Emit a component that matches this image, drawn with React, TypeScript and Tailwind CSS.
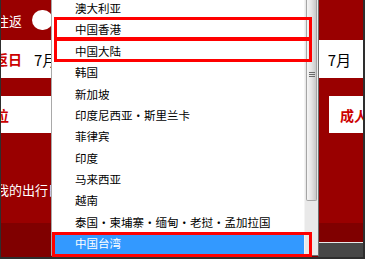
const regions = [
  "澳大利亚",
  "中国香港",
  "中国大陆",
  "韩国",
  "新加坡",
  "印度尼西亚・斯里兰卡",
  "菲律宾",
  "印度",
  "马来西亚",
  "越南",
  "泰国・柬埔寨・缅甸・老挝・孟加拉国",
  "中国台湾",
];

const selected = "中国台湾";

export default function App() {
  return (
    <div className="relative w-[365px] h-[259px] overflow-hidden bg-[#990000] border-l border-r-2 border-b-2 border-[#2e2e2e] font-['Noto_Sans_CJK_SC','Noto_Sans',sans-serif]">
      {/* page behind the dropdown */}
      <div className="flex flex-col h-full">
        <div className="h-[40px] flex items-center shrink-0">
          <span className="ml-[-5px] text-[13px] text-white leading-none">往返</span>
          <span className="ml-[10px] w-[21px] h-[20px] rounded-full bg-white" />
        </div>

        <div className="h-[38px] flex items-center bg-white shrink-0">
          <span className="ml-[-7px] text-[14px] font-bold text-[#cc0000] leading-none">返日</span>
          <span className="ml-[12px] text-[15px] text-black leading-none">7月</span>
          <span className="ml-auto mr-[12px] text-[15px] text-black leading-none">7月</span>
        </div>

        <div className="h-[18px] shrink-0" />

        <div className="h-[37px] flex shrink-0">
          <div className="w-[50px] bg-white flex items-center">
            <span className="ml-[-6px] text-[14px] font-bold text-[#cc0000] leading-none">位</span>
          </div>
          <div className="flex-1" />
          <div className="w-[34px] bg-white flex items-center">
            <span className="ml-[11px] text-[14px] font-bold text-[#cc0000] leading-none whitespace-nowrap">成人</span>
          </div>
        </div>

        <div className="h-[90px] flex items-end pb-[27px] shrink-0">
          <span className="ml-[-5px] text-[13px] text-white leading-none whitespace-nowrap">我的出行日</span>
        </div>

        <div className="flex-1 flex">
          <div className="flex-1 bg-[#800000]" />
          <div className="w-[45px] flex flex-col">
            <div className="h-[19px] bg-[#800000]" />
            <div className="h-px bg-[#e8e8e8]" />
            <div className="flex-1 bg-[#474747]" />
          </div>
        </div>
      </div>

      {/* open select list */}
      <div className="absolute left-[50px] top-[-2px] w-[268px] h-[258px] flex bg-white border-l border-r border-b border-l-[#a9a9a9] border-r-[#6e6e6e] border-b-[#6e6e6e]">
        <div className="flex-1 flex flex-col">
          {regions.map((r) => (
            <div
              key={r}
              className={`h-[21.4px] shrink-0 flex items-center pl-[23px] text-[11.5px] leading-none whitespace-nowrap ${
                r === selected ? "bg-[#3399ff] text-white" : "text-black"
              }`}
            >
              {r}
            </div>
          ))}
        </div>
        <div className="w-[14px] flex flex-col bg-[#e9e9e9] border-l border-[#f4f4f4]">
          <div className="h-[203px] mx-px rounded-b-[2px] border border-t-0 border-[#a5a5a5] bg-gradient-to-r from-[#f6f6f6] via-[#e4e4e4] to-[#c9c9c9] flex flex-col items-center pt-[74px] gap-[1px]">
            <span className="w-[6px] h-px bg-[#6a6a6a]" />
            <span className="w-[6px] h-px bg-[#6a6a6a]" />
            <span className="w-[6px] h-px bg-[#6a6a6a]" />
          </div>
        </div>
      </div>

      {/* annotation boxes */}
      <div className="absolute left-[53px] top-[17px] w-[258px] h-[23px] border-[3px] border-[#ff0000]" />
      <div className="absolute left-[53px] top-[38px] w-[258px] h-[24px] border-[3px] border-[#ff0000]" />
      <div className="absolute left-[51px] top-[232px] w-[260px] h-[25px] border-[3px] border-[#ff0000]" />
    </div>
  );
}
